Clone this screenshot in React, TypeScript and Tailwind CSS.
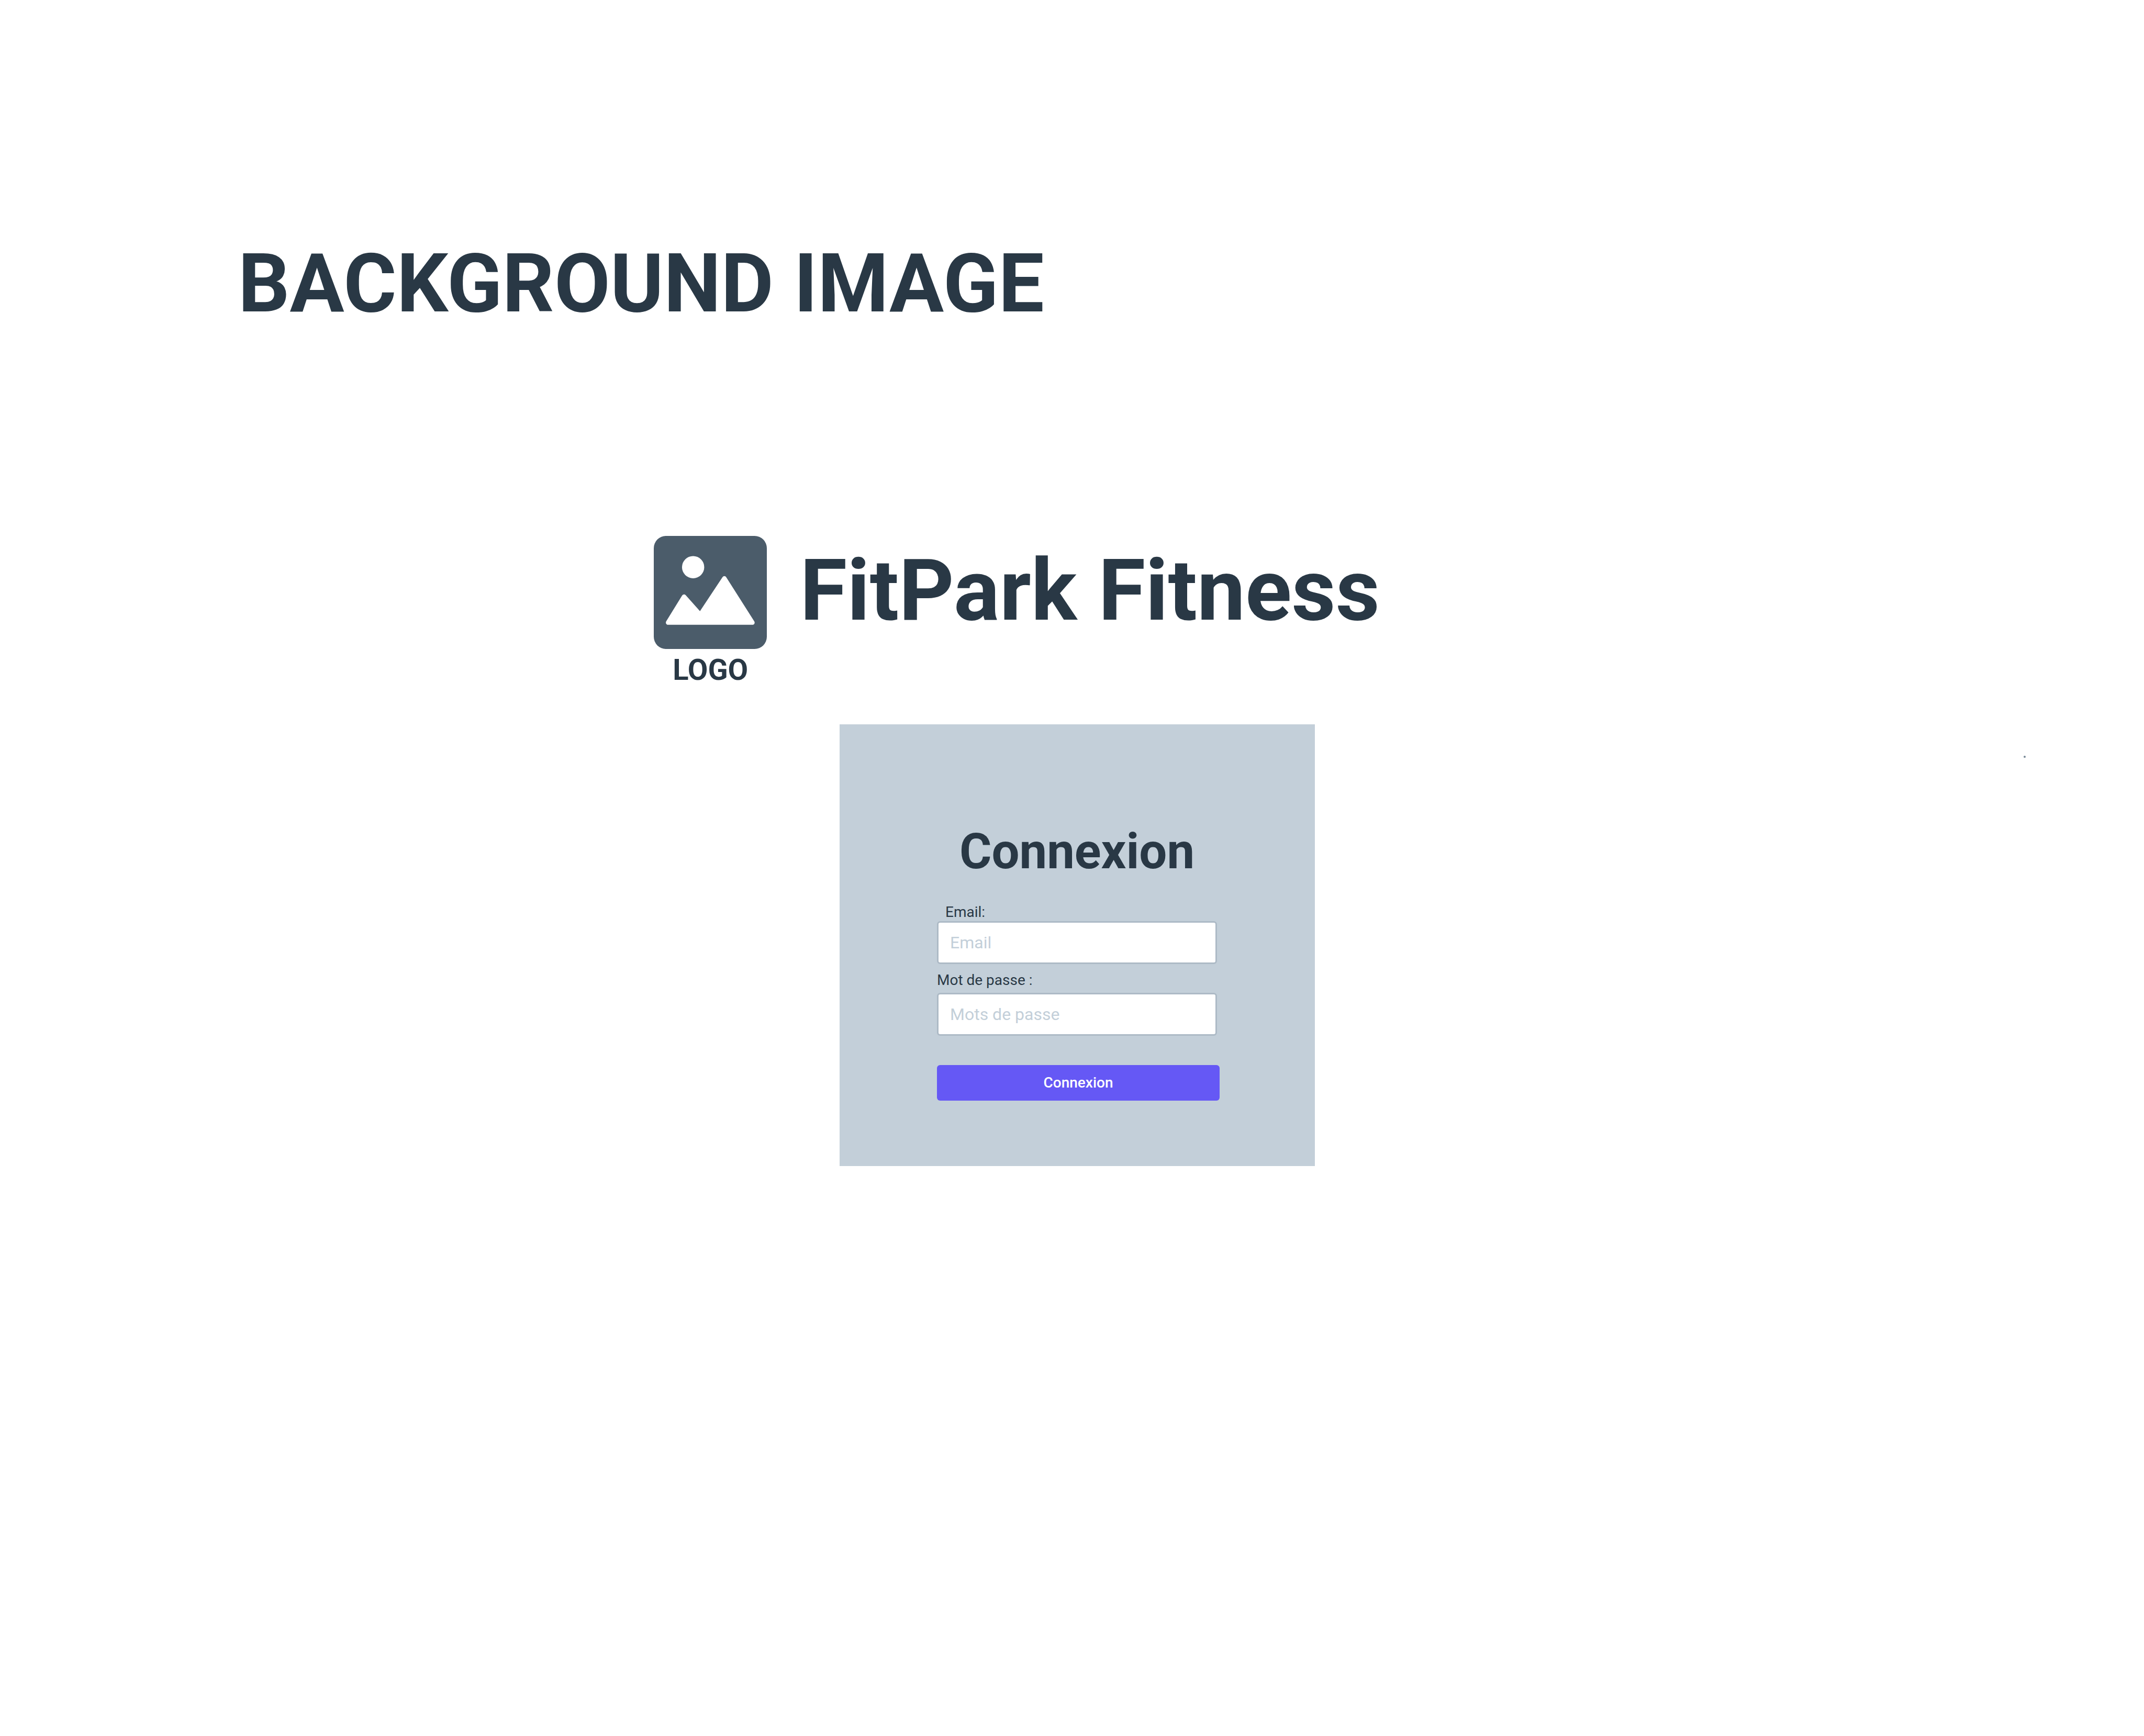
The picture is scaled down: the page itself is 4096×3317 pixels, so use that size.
const labelStyle = "block text-[28px] leading-[34px]";
const fieldStyle =
  "block h-[82px] w-full rounded-[6px] border-[3px] border-[#adbac6] bg-white pl-[22px] text-[32px] text-[#293845] placeholder:text-[#c3cfd9] placeholder:opacity-100";

function Logo() {
  return (
    <div className="flex w-[216px] shrink-0 flex-col items-center">
      <svg viewBox="99 111 793 793" className="block h-[216px] w-[216px]" aria-hidden="true">
        <rect x="99" y="111" width="793" height="793" rx="86" fill="#4b5c6a" />
        <circle cx="375" cy="330" r="78" fill="#fff" />
        <path
          fill="#fff"
          d="M199 734H791C803 734 811 723 804 710L608 402C601 390 588 390 580 402L423 639L324 528C317 519 305 519 298 529L186 710C180 722 187 734 199 734Z"
        />
      </svg>
      <span className="mt-[12px] text-[56px] leading-none font-bold">LOGO</span>
    </div>
  );
}

function LoginForm() {
  return (
    <form
      className="bg-[#c3cfd9] pt-[196px] pr-[182px] pb-[125px] pl-[186px]"
      onSubmit={(event) => event.preventDefault()}
    >
      <div className="mr-[5px]">
        <h2 className="text-center text-[94px] leading-none font-bold">Connexion</h2>
        <label htmlFor="email" className={`${labelStyle} mt-[52px] pl-4`}>
          Email:
        </label>
        <input id="email" type="email" placeholder="Email" className={fieldStyle} />
        <label htmlFor="password" className={`${labelStyle} mt-[14px]`}>
          Mot de passe :
        </label>
        <input
          id="password"
          type="password"
          placeholder="Mots de passe"
          className={`${fieldStyle} mt-[7px]`}
        />
      </div>
      <button
        type="submit"
        className="mt-[56px] block h-[68px] w-full rounded-[6px] bg-[#6558f5] text-[28px] font-medium text-white"
      >
        Connexion
      </button>
    </form>
  );
}

export default function App() {
  return (
    <main className="min-h-screen bg-white pt-[465px] font-['Roboto',sans-serif] text-[#293845]">
      <h1 className="pl-[11.1%] text-[155px] leading-none font-bold">BACKGROUND IMAGE</h1>
      <header className="mt-[404px] flex items-start gap-[63px] pl-[30.5%]">
        <Logo />
        <p className="mt-[22px] text-[164px] leading-none font-bold whitespace-nowrap">FitPark Fitness</p>
      </header>
      <div className="mt-[76px] grid grid-cols-[1604fr_908fr_1584fr]">
        <div />
        <LoginForm />
        <div className="pt-[60px] pl-[85.5%]">
          <div className="h-1 w-1 rounded-full bg-[#788896]" />
        </div>
      </div>
    </main>
  );
}
